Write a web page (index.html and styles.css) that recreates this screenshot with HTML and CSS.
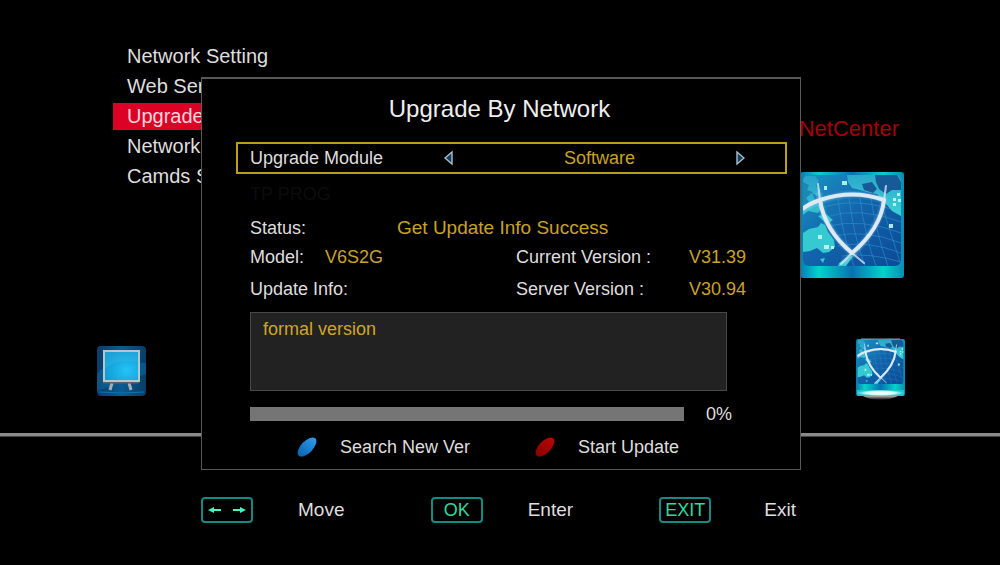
FILE: index.html
```html
<!DOCTYPE html>
<html lang="en">
<head>
<meta charset="utf-8">
<meta name="viewport" content="width=device-width, initial-scale=1">
<title>Upgrade By Network</title>
<link rel="stylesheet" href="styles.css">
</head>
<body>
<div class="screen">
  <main class="stage">
    <div class="top">
      <nav class="menu" aria-label="NetCenter">
        <a class="menu-item" href="#network">Network Setting</a>
        <a class="menu-item" href="#web">Web Ser</a>
        <a class="menu-item is-active" href="#upgrade" aria-current="page">Upgrade</a>
        <a class="menu-item" href="#net">Network</a>
        <a class="menu-item" href="#camds">Camds S</a>
      </nav>
      <section class="center">
        <h2 class="center-name">NetCenter</h2>
        <svg class="emblem" viewBox="0 0 104 106" aria-hidden="true">
          <defs>
            <linearGradient id="frame" x1="0" x2="1" y1="0" y2="0">
              <stop offset="0" stop-color="#0878b4"/><stop offset=".18" stop-color="#06d2c8"/>
              <stop offset=".5" stop-color="#0672b4"/><stop offset=".8" stop-color="#06d2c8"/>
              <stop offset="1" stop-color="#0a8cb4"/>
            </linearGradient>
            <linearGradient id="sea" x1="0" x2="1" y1="0" y2="1">
              <stop offset="0" stop-color="#1a94c4"/><stop offset=".5" stop-color="#1262aa"/>
              <stop offset="1" stop-color="#0c4a96"/>
            </linearGradient>
            <linearGradient id="land" x1="0" x2="0" y1="0" y2="1">
              <stop offset="0" stop-color="#2ba8cc"/><stop offset="1" stop-color="#3cd2d6"/>
            </linearGradient>
            <clipPath id="panel"><rect x="3" y="3" width="98" height="91" rx="6"/></clipPath>
            <filter id="soft" x="-20%" y="-20%" width="140%" height="140%"><feGaussianBlur stdDeviation="1.2"/></filter>
            <filter id="edge" x="-10%" y="-20%" width="120%" height="140%"><feGaussianBlur stdDeviation=".6"/></filter>
            <symbol id="globe" viewBox="0 0 104 94" preserveAspectRatio="none">
              <g clip-path="url(#panel)">
                <rect x="3" y="3" width="98" height="91" fill="url(#sea)"/>
                <path d="M22 36Q54 24 101 40M25 45Q60 34 101 50M28 54Q62 46 101 61M34 64Q65 57 101 71M38 74Q68 68 101 81M42 84Q68 80 101 90M38 27Q43 65 54 94M49 26Q54 65 65 94M60 26Q65 65 76 94M71 27Q76 60 88 94M82 34L100 90" fill="none" stroke="#3399cf" stroke-width="1" opacity=".55"/>
                <path d="M47 3H101V44L92 39L87 33L82 28L77 22L67 20L60 18L52 16L48 10Z" fill="url(#land)"/>
                <path d="M75 3H97L101 10V18H92L86 22L79 17L76 10ZM62 12L72 10L77 17L73 21L64 18Z" fill="#165b98"/>
                <path d="M3 4H15L19 9L16 14L21 18L17 24L12 21L16 30L22 35L18 41L8 39L3 43Z" fill="url(#land)" opacity=".8"/>
                <path d="M3 10L9 13L7 18L13 20L6 26L10 31L3 35Z" fill="#157aa9" opacity=".75"/>
                <path d="M3 61L9 57L18 55L21 51L25 53L28 60L34 68L35 75L29 80L23 81L17 76L10 79L3 80ZM18 44L26 42L33 48L27 52ZM20 87L25 86L23 91ZM39 91L48 85L53 84L46 94H38Z" fill="#35c9d2"/>
                <path d="M2 38Q46 12 86 29M19 20C19 38 30 63 52 81M84 25C84 43 69 69 43 91" fill="none" stroke="#8ed9ef" stroke-width="5" opacity=".5" filter="url(#soft)"/>
                <g fill="none" stroke="#dfe9f5" stroke-linecap="round" filter="url(#edge)">
                  <path d="M1 38Q10 31 20 28Q52 17 84 28" stroke-width="4"/>
                  <path d="M20 28C23 48 34 66 52 81M84 28C82 47 70 66 52 81" stroke-width="4"/>
                  <path d="M18 12L20 28M86 14L84 28M52 81L64 91M52 81L41 92" stroke-width="2" opacity=".75"/>
                </g>
                <path d="M24 14h3v4h-3zM42 9h5v4h-5zM89 52h4v4h-4zM18 63h4v4h-4zM24 73h5v4h-5zM31 74h3v3h-3zM97 21h3v3h-3zM93 26h3v3h-3zM98 27h3v3h-3zM93 31h3v3h-3z" fill="#c7fff7" opacity=".85" filter="url(#edge)"/>
              </g>
            </symbol>
          </defs>
          <rect width="104" height="106" rx="3" fill="url(#frame)"/>
          <use href="#globe" width="104" height="94"/>
        </svg>
      </section>
    </div>
    <div class="shortcuts">
      <svg class="tile" viewBox="0 0 49 62" aria-hidden="true">
        <defs>
          <radialGradient id="tv" cx=".65" cy=".65" r=".75">
            <stop offset="0" stop-color="#25c4f5"/><stop offset="1" stop-color="#0c94d0"/>
          </radialGradient>
          <linearGradient id="tvback" x1="0" x2="1" y1="0" y2="0">
            <stop offset="0" stop-color="#083d68"/><stop offset=".5" stop-color="#0b5c91"/><stop offset="1" stop-color="#083d68"/>
          </linearGradient>
        </defs>
        <rect y="8" width="49" height="50" rx="4" fill="url(#tvback)"/>
        <path d="M0 36Q7 26 20 25H49V36L0 53Z" fill="#0a6da4" opacity=".5"/>
        <path d="M2 54Q25 56 47 54" fill="none" stroke="#0677b8"/>
        <path d="M15 45L13 52M32 45L34 52" stroke="#a5afb6" stroke-width="3"/>
        <path d="M6 44H42" stroke="#56636b" stroke-width="3"/>
        <rect x="7" y="13" width="35" height="30" fill="url(#tv)" stroke="#b7c5cd" stroke-width="2"/>
        <path d="M8 31Q20 20 41 24V14H8Z" fill="#42bce6" opacity=".3"/>
      </svg>
      <svg class="tile" viewBox="0 0 49 62" aria-hidden="true">
        <defs>
          <radialGradient id="shine"><stop offset="0" stop-color="#fff"/><stop offset=".6" stop-color="#d2ffff"/><stop offset="1" stop-color="#18c8ce"/></radialGradient>
          <linearGradient id="fade" x1="0" x2="0" y1="0" y2="1"><stop offset="0" stop-color="#ddd"/><stop offset="1" stop-color="#000"/></linearGradient>
        </defs>
        <path d="M5 57H44Q35 62 24 62T5 57Z" fill="url(#fade)"/>
        <rect y="1" width="49" height="57" rx="2" fill="url(#frame)"/>
        <use href="#globe" width="49" height="46"/>
        <path d="M1 52H48V56Q48 58 46 58H3Q1 58 1 56Z" fill="url(#shine)"/>
        <path d="M5 1H44" stroke="#829da5"/>
      </svg>
    </div>
  </main>

  <footer class="hints">
    <div class="hint">
      <kbd class="key"><svg class="arrows" viewBox="0 0 38 8" role="img" aria-label="Left and right">
        <path d="M0 4L6 1V3H13V5H6V7ZM38 4L32 1V3H25V5H32V7Z" fill="#43f5c0"/></svg></kbd>
      <span>Move</span>
    </div>
    <div class="hint"><kbd class="key">OK</kbd><span>Enter</span></div>
    <div class="hint hint-last"><kbd class="key">EXIT</kbd><span>Exit</span></div>
  </footer>

  <div class="dialog" role="dialog" aria-labelledby="title">
    <h1 class="title" id="title">Upgrade By Network</h1>
    <div class="module" role="group" aria-labelledby="module-label">
      <span class="module-label" id="module-label">Upgrade Module</span>
      <button class="step" type="button" aria-label="Previous module">
        <svg class="step-icon" viewBox="0 0 10 16" aria-hidden="true"><path d="M8 2V14L1 8Z" fill="#183c5c" stroke="#a9bfcc" stroke-width="1.4"/></svg>
      </button>
      <output class="module-value">Software</output>
      <button class="step" type="button" aria-label="Next module">
        <svg class="step-icon" viewBox="0 0 10 16" aria-hidden="true"><path d="M2 2V14L9 8Z" fill="#183c5c" stroke="#a9bfcc" stroke-width="1.4"/></svg>
      </button>
    </div>
    <div class="details">
      <p class="ghost">TP PROG</p>
      <div class="row row-status"><span>Status:</span><span class="value status">Get Update Info Success</span></div>
      <div class="row row-model"><span>Model:</span><span class="value">V6S2G</span><span>Current Version :</span><span class="value">V31.39</span></div>
      <div class="row row-info"><label class="info-label" for="info">Update Info:</label><span>Server Version :</span><span class="value">V30.94</span></div>
      <textarea class="info" id="info" readonly>formal version</textarea>
      <div class="progress-row">
        <progress class="progress" id="progress" value="0" max="100" aria-label="Update progress"></progress>
        <label for="progress">0%</label>
      </div>
      <div class="actions">
        <button class="action" type="button">
          <svg class="pill" viewBox="0 0 20 20" aria-hidden="true">
            <defs><linearGradient id="blue" x1="1" x2="0" y1="0" y2="0"><stop offset="0" stop-color="#2f9bea"/><stop offset="1" stop-color="#0565b0"/></linearGradient></defs>
            <ellipse cx="10" cy="10" rx="12" ry="6" transform="rotate(-46 10 10)" fill="url(#blue)"/></svg>
          Search New Ver
        </button>
        <button class="action" type="button">
          <svg class="pill" viewBox="0 0 20 20" aria-hidden="true">
            <defs><linearGradient id="red" x1="1" x2="0" y1="0" y2="0"><stop offset="0" stop-color="#b80606"/><stop offset="1" stop-color="#8c0000"/></linearGradient></defs>
            <ellipse cx="10" cy="10" rx="12" ry="6" transform="rotate(-46 10 10)" fill="url(#red)"/></svg>
          Start Update
        </button>
      </div>
    </div>
  </div>
</div>
</body>
</html>
```
FILE: styles.css
```css
* {
  box-sizing: border-box;
}

body {
  margin: 0;
  background: #000;
  color: #dedede;
  font: 18px/24px "Liberation Sans", Arial, sans-serif;
}

h1,
h2,
p {
  margin: 0;
  font-weight: 400;
}

button {
  padding: 0;
  border: 0;
  background: none;
  color: inherit;
  font: inherit;
}

svg {
  display: block;
}

.screen {
  position: relative;
  min-height: 100vh;
}

.stage {
  padding-top: 43px;
  border-bottom: 3px solid #8a8a8a;
  box-shadow: 0 1px #444;
}

.top {
  display: flex;
  justify-content: space-between;
  padding: 0 96px 0 113px;
}

.menu {
  display: flex;
  flex-direction: column;
  gap: 3px;
  width: 240px;
}

.menu-item {
  padding-left: 14px;
  color: #dedede;
  font-size: 20px;
  line-height: 27px;
  text-decoration: none;
}

.is-active {
  background: #dc0226;
  color: #ffd5dc;
}

.center {
  display: flex;
  flex-direction: column;
  align-items: flex-end;
  gap: 29px;
  padding-top: 72px;
}

.center-name {
  padding-right: 5px;
  color: #a40205;
  font-size: 22px;
  line-height: 28px;
}

.emblem {
  width: 104px;
  height: 106px;
}

.shortcuts {
  display: flex;
  justify-content: space-between;
  padding: 60px 95px 33px 97px;
}

.tile {
  width: 49px;
  height: 62px;
}

.hints {
  display: flex;
  justify-content: space-between;
  padding: 61px 204px 30px 201px;
  font-size: 19px;
}

.hint {
  display: flex;
  align-items: center;
  gap: 45px;
}

.hint-last {
  gap: 53px;
}

.key {
  display: grid;
  place-items: center;
  width: 52px;
  height: 26px;
  border: 2px solid #138b83;
  border-radius: 4px;
  color: #32d99b;
  font: 18px/22px "Liberation Sans", Arial, sans-serif;
}

.arrows {
  width: 38px;
  height: 8px;
}

.dialog {
  position: absolute;
  top: 77px;
  right: 0;
  left: 2px;
  width: 60%;
  min-width: 600px;
  margin: 0 auto;
  padding: 16px 13px 10px 34px;
  border: 2px solid #585858;
  border-width: 2px 1px 1px;
  background: #000;
}

.title {
  padding-right: 24px;
  color: #efefef;
  font-size: 24px;
  line-height: 28px;
  text-align: center;
}

.module {
  display: flex;
  align-items: center;
  height: 32px;
  margin-top: 19px;
  padding: 0 40px 0 12px;
  border: 2px solid #baa019;
}

.module-label {
  width: 194px;
}

.module-value {
  flex: 1;
  padding-left: 10px;
  color: #c9a327;
  text-align: center;
}

.step-icon {
  width: 10px;
  height: 16px;
}

.details {
  padding: 8px 0 0 14px;
}

.ghost {
  color: #0c0c0c;
}

.row {
  display: grid;
  grid-template-columns: 75px 191px 173px 1fr;
  white-space: nowrap;
}

.row-status {
  margin-top: 10px;
}

.row-model {
  margin-top: 5px;
}

.row-info {
  margin-top: 8px;
}

.value {
  color: #c9a327;
}

.status {
  grid-column: 2 / -1;
  padding-left: 72px;
  font-size: 19px;
}

.info-label {
  grid-column: 1 / 3;
}

.info {
  display: block;
  width: 477px;
  height: 79px;
  margin-top: 11px;
  padding: 4px 12px;
  border: 1px solid #484848;
  background: #222;
  color: #d0a626;
  font: inherit;
  resize: none;
  outline: 0;
}

.progress-row {
  display: flex;
  align-items: center;
  gap: 22px;
  margin-top: 11px;
}

.progress {
  width: 434px;
  height: 14px;
  border: 0;
  background: #757575;
  appearance: none;
}

.progress::-webkit-progress-bar {
  background: #757575;
}

.progress::-webkit-progress-value {
  background: #c9a327;
}

.actions {
  display: grid;
  grid-template-columns: 238px 1fr;
  margin-top: 9px;
  padding-left: 47px;
}

.action {
  display: flex;
  align-items: center;
  gap: 23px;
}

.pill {
  width: 20px;
  height: 20px;
}
```
